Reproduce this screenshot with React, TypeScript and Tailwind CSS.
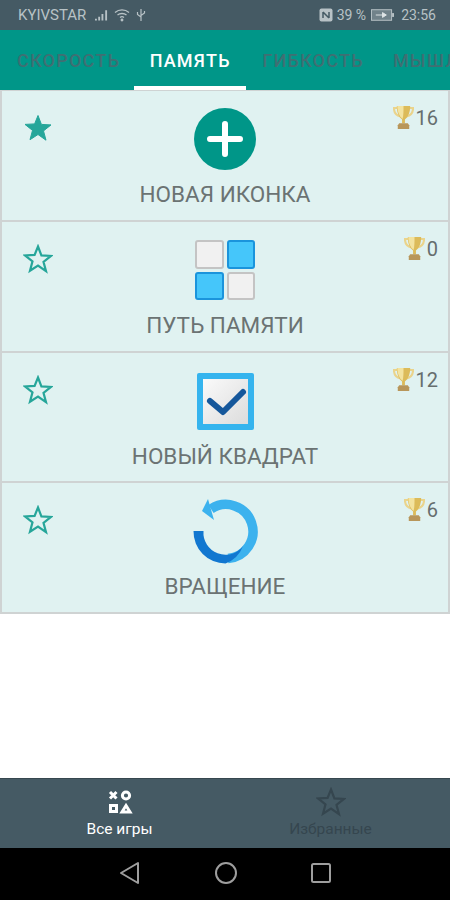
import { ReactNode } from 'react';

function Star({ filled, className }: { filled?: boolean; className: string }) {
  return (
    <svg viewBox="0 0 30 30" className={className} fill={filled ? 'currentColor' : 'none'} stroke="currentColor" strokeWidth={filled ? 1 : 2.2} strokeLinejoin="miter">
      <path d="M15 2.500l3.400 8.900 9.600.5-7.500 6 2.500 9.300L15 21.500l-8 5.200 2.500-9.300-7.500-6 9.600-.5z" />
    </svg>
  );
}

function Trophy() {
  return (
    <svg viewBox="0 0 22 26" className="w-[21px] h-[25px]">
      <path d="M5 3H1c0 5 3 8 7 9M17 3h4c0 5-3 8-7 9" fill="none" stroke="#ead48c" strokeWidth="2.200" />
      <path d="M4 1h14c0 7-2.500 12-5.500 14v4h-3v-4C6.500 13 4 8 4 1z" fill="#dcbb5a" />
      <path d="M4.500 1H11c0 6 0 10-1 13.500C7 12.500 4.500 7.500 4.500 1z" fill="#f3e3a0" />
      <path d="M6.500 19h9l1.500 2v4H5v-4z" fill="#b8965a" />
    </svg>
  );
}

function PlusIcon() {
  return (
    <svg viewBox="0 0 62 62" className="w-[62px] h-[62px]">
      <circle cx="31" cy="31" r="31" fill="#009688" />
      <path d="M31 16v30M16 31h30" stroke="#fff" strokeWidth="6" strokeLinecap="round" />
    </svg>
  );
}

function Tile({ on }: { on?: boolean }) {
  return (
    <div className={on ? 'rounded-[3px] border-[2px] border-[#1a94dc] bg-[#45c6fa]' : 'rounded-[3px] border-[2px] border-[#c4c4c4] bg-[#f1f1f1]'} />
  );
}

function PathIcon() {
  return (
    <div className="w-[60px] h-[60px] grid grid-cols-2 grid-rows-2 gap-[3px]">
      <Tile />
      <Tile on />
      <Tile on />
      <Tile />
    </div>
  );
}

function CheckIcon() {
  return (
    <div className="w-[57px] h-[57px] rounded-[2px] bg-[#35b4ee] p-[6px]">
      <div className="w-full h-full bg-gradient-to-br from-[#fafafa] to-[#dcdcdc]">
        <svg viewBox="0 0 45 45" className="w-full h-full">
          <path d="M7 22l13 11L40 13" fill="none" stroke="#15579b" strokeWidth="6" strokeLinecap="round" strokeLinejoin="round" />
        </svg>
      </div>
    </div>
  );
}

function RotateIcon() {
  return (
    <svg viewBox="0 0 66 66" className="w-[66px] h-[66px]">
      <path d="M19 11A27 27 0 1 1 36 60.400" fill="none" stroke="#3cb2ee" strokeWidth="9.500" />
      <path d="M16 1L10 13l12 9z" fill="#3cb2ee" />
      <path d="M1.500 33H11.500A22 22 0 0 0 51 48A30 30 0 0 1 33.500 65.500A32 32 0 0 1 1.500 33z" fill="#1277d0" />
    </svg>
  );
}

function GamesIcon() {
  return (
    <svg viewBox="0 0 26 26" className="w-[26px] h-[26px]" fill="none" stroke="#fff" strokeWidth="3">
      <path d="M3 3l6.500 6.500M9.500 3L3 9.500" />
      <circle cx="19" cy="6.500" r="3.600" />
      <rect x="3.500" y="16.500" width="6" height="6" />
      <path d="M19 16.500l4 6.500h-8z" strokeLinejoin="miter" />
    </svg>
  );
}

type Game = { name: string; score: number; fav?: boolean; icon: ReactNode; h: string };

const games: Game[] = [
  { name: 'НОВАЯ ИКОНКА', score: 16, fav: true, icon: <PlusIcon />, h: 'h-[131px]' },
  { name: 'ПУТЬ ПАМЯТИ', score: 0, icon: <PathIcon />, h: 'h-[131px]' },
  { name: 'НОВЫЙ КВАДРАТ', score: 12, icon: <CheckIcon />, h: 'h-[130px]' },
  { name: 'ВРАЩЕНИЕ', score: 6, icon: <RotateIcon />, h: 'h-[131px]' },
];

function GameCard({ game }: { game: Game }) {
  return (
    <div className={`relative ${game.h} bg-[#e0f2f1] border-2 border-t-0 border-[#cfd3d3] flex flex-col items-center`}>
      <div className="h-[84px] mt-[6px] flex items-center justify-center">{game.icon}</div>
      <div className="text-[22.500px] leading-[26px] text-[#6b7373]">{game.name}</div>
      <Star filled={game.fav} className="absolute left-[21px] top-[22px] w-[30px] h-[30px] text-[#26a69a]" />
      <div className="absolute right-[10px] top-[14px] flex items-center gap-[2px] text-[20px] leading-[24px] text-[#666e6e]">
        <Trophy />
        <span>{game.score}</span>
      </div>
    </div>
  );
}

export default function App() {
  return (
    <div className="w-[450px] h-[900px] flex flex-col bg-white overflow-hidden font-['Roboto',sans-serif]">
      <div className="h-[30px] shrink-0 bg-[#455a64] flex items-center justify-between pl-[18px] pr-[14px] text-[14px] text-[#b8c2c6]">
        <div className="flex items-center">
          <span className="text-[15px] mr-[9px]">KYIVSTAR</span>
          <svg viewBox="0 0 14 12" className="w-[13px] h-[12px] mr-[6px]" fill="#b8c2c6">
            <path d="M0 10h2v2H0zM3.500 8h2v4h-2zM7 5h2v7H7zM11 1h2v11h-2z" />
          </svg>
          <svg viewBox="0 0 16 14" className="w-[16px] h-[14px] mr-[6px]" fill="none" stroke="#b8c2c6" strokeWidth="1.300">
            <path d="M1 4.500c4-3.500 10-3.500 14 0M3.500 7c2.500-2 6.500-2 9 0M6 9.500c1-.8 3-.8 4 0" />
            <circle cx="8" cy="12" r=".8" fill="#b8c2c6" />
          </svg>
          <svg viewBox="0 0 10 14" className="w-[10px] h-[14px]" fill="none" stroke="#b8c2c6" strokeWidth="1.200">
            <path d="M5 1v12M1.500 4v2.500L5 9M8.500 3v2L5 7.500" />
          </svg>
        </div>
        <div className="flex items-center">
          <svg viewBox="0 0 14 14" className="w-[14px] h-[14px] mr-[4px]">
            <rect x="0.500" y="0.500" width="13" height="13" rx="2" fill="#b8c2c6" />
            <path d="M4 4v6M4 4l6 6M10 4v6" stroke="#455a64" strokeWidth="1.500" fill="none" />
          </svg>
          <span className="mr-[5px]">39 %</span>
          <svg viewBox="0 0 24 12" className="w-[23px] h-[12px] mr-[7px]">
            <rect x="0.500" y="0.500" width="21" height="11" fill="#71828a" stroke="#b8c2c6" />
            <rect x="22" y="4" width="2" height="4" fill="#b8c2c6" />
            <path d="M5 6h10M12 3.500L16 6l-4 2.500z" stroke="#dfe4e6" fill="#dfe4e6" />
          </svg>
          <span>23:56</span>
        </div>
      </div>

      <div className="h-[60px] shrink-0 bg-[#009688] flex overflow-hidden text-[18px] font-medium tracking-[1.250px] whitespace-nowrap">
        <div className="h-full pl-[17px] pr-[14px] flex items-center text-[#3f6f73]">СКОРОСТЬ</div>
        <div className="h-full w-[112px] shrink-0 flex items-center justify-center text-white border-b-[4px] border-white pt-[4px]">ПАМЯТЬ</div>
        <div className="h-full pl-[16px] pr-[14px] flex items-center text-[#3f6f73]">ГИБКОСТЬ</div>
        <div className="h-full px-[15px] flex items-center text-[#3f6f73]">МЫШЛЕНИЕ</div>
      </div>

      <div className="flex-1 border-t-[1px] border-[#cfd3d3]">
        {games.map((g) => (
          <GameCard key={g.name} game={g} />
        ))}
      </div>

      <div className="h-[70px] shrink-0 bg-[#455a64] border-t-[1px] border-[#37474f] flex px-[14px] text-[15.500px] leading-[18px]">
        <div className="flex-1 flex flex-col items-center pt-[10px] gap-[5px] text-white">
          <GamesIcon />
          <span>Все игры</span>
        </div>
        <div className="flex-1 flex flex-col items-center pt-[8px] gap-[3px] text-[#35464f]">
          <Star className="w-[30px] h-[30px]" />
          <span>Избранные</span>
        </div>
      </div>

      <div className="h-[52px] shrink-0 bg-black flex items-center justify-center gap-[74px] pb-[2px]">
        <svg viewBox="0 0 22 24" className="w-[22px] h-[24px]" fill="none" stroke="#9e9e9e" strokeWidth="2" strokeLinejoin="round">
          <path d="M19 2v20L2 12z" />
        </svg>
        <svg viewBox="0 0 22 22" className="w-[22px] h-[22px]" fill="none" stroke="#9e9e9e" strokeWidth="2">
          <circle cx="11" cy="11" r="10" />
        </svg>
        <svg viewBox="0 0 20 20" className="w-[20px] h-[20px]" fill="none" stroke="#9e9e9e" strokeWidth="2">
          <rect x="1" y="1" width="18" height="18" rx="1.500" />
        </svg>
      </div>
    </div>
  );
}
